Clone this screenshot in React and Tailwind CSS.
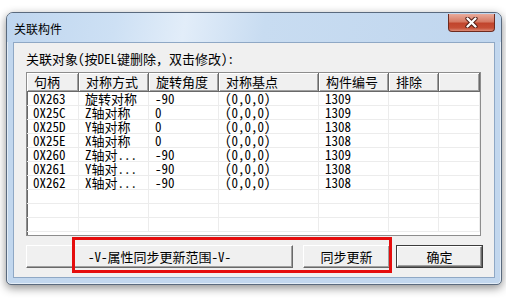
import React from 'react';

const font = "font-['Noto_Sans_Mono_CJK_SC','Noto_Sans_CJK_SC',monospace]";

const columns = [
    { title: '句柄', w: 'w-[52px]' },
    { title: '对称方式', w: 'w-[70px]' },
    { title: '旋转角度', w: 'w-[70px]' },
    { title: '对称基点', w: 'w-[100px]' },
    { title: '构件编号', w: 'w-[70px]' },
    { title: '排除', w: 'w-[50px]' },
    { title: '', w: 'flex-1' },
];

const rows = [
    ['0X263', '旋转对称', '-90', '(0,0,0)', '1309', ''],
    ['0X25C', 'Z轴对称', '0', '(0,0,0)', '1309', ''],
    ['0X25D', 'Y轴对称', '0', '(0,0,0)', '1308', ''],
    ['0X25E', 'X轴对称', '0', '(0,0,0)', '1308', ''],
    ['0X260', 'Z轴对...', '-90', '(0,0,0)', '1309', ''],
    ['0X261', 'Y轴对...', '-90', '(0,0,0)', '1308', ''],
    ['0X262', 'X轴对...', '-90', '(0,0,0)', '1308', ''],
    ['', '', '', '', '', ''],
    ['', '', '', '', '', ''],
    ['', '', '', '', '', ''],
];

const btn = "h-[23px] bg-[#f0f0f0] border border-t-white border-l-white border-r-[#696969] border-b-[#696969] shadow-[inset_-1px_-1px_0_#a0a0a0] flex items-center justify-center text-[13px] leading-[14px] text-black";

const App = () => {
    return (
        <div className="w-[506px] h-[303px] bg-white pt-[12px] pl-[6px]">
            {/* window */}
            <div className="w-[496px] flex flex-col border border-[#5a6a7e] rounded-t-[7px] rounded-b-[5px] bg-[#c2d7ee] shadow-[0_3px_10px_rgba(0,0,0,0.45),inset_0_0_0_1px_rgba(255,255,255,0.55)] pb-[6px]">
                {/* title bar */}
                <div className="h-[29px] flex justify-between pl-[7px] pr-[6px] rounded-t-[6px] bg-[linear-gradient(100deg,#bfd6ef_0%,#cde0f4_22%,#e2edf9_36%,#c8dcf1_52%,#c0d6ee_100%)]">
                    <span className="mt-[9px] h-[14px] leading-[14px] text-[12px] text-black font-['Noto_Sans_CJK_SC',sans-serif]">关联构件</span>
                    <div className="mt-[1px] w-[47px] h-[18px] rounded-b-[4px] border border-t-0 border-[#6e2a1e] bg-[linear-gradient(to_bottom,#e9ab9b_0%,#d67a64_45%,#c1452d_55%,#c64f36_82%,#dc8a76_100%)] flex items-center justify-center">
                        <svg width="13" height="11" viewBox="0 0 13 11">
                            <path d="M2.5 1.5 L10.5 9.5 M10.5 1.5 L2.5 9.5" stroke="#4a1810" strokeWidth="4.2" strokeLinecap="round" />
                            <path d="M2.5 1.5 L10.5 9.5 M10.5 1.5 L2.5 9.5" stroke="#ffffff" strokeWidth="2.4" strokeLinecap="round" />
                        </svg>
                    </div>
                </div>

                {/* client area */}
                <div className={`relative mx-[6px] w-[482px] h-[236px] border border-[#8fa8c5] bg-[#f0f0f0] pt-[9px] pl-[12px] ${font}`}>
                    <div className="h-[14px] leading-[14px] text-[13px] text-black">关联对象(按DEL键删除，双击修改):</div>

                    {/* list view */}
                    <div className="mt-[6px] w-[455px] h-[164px] bg-white border border-[#8d8d8d] shadow-[inset_1px_1px_0_#696969] flex flex-col">
                        <div className="flex h-[19px] shrink-0">
                            {columns.map((c, i) => (
                                <div key={i} className={`${c.w} h-[19px] bg-[#f0f0f0] border-r border-b border-[#696969] shadow-[inset_1px_1px_0_#fff,inset_-1px_-1px_0_#a0a0a0] pl-[7px] text-[13px] leading-[18px] text-black whitespace-nowrap`}>
                                    {c.title}
                                </div>
                            ))}
                        </div>
                        {rows.map((r, ri) => (
                            <div key={ri} className="flex h-[14px] shrink-0">
                                {columns.map((c, ci) => (
                                    <div key={ci} className={`${c.w} h-[14px] border-r border-b border-[#ececec] pl-[6px] text-[13px] leading-[14px] text-black whitespace-nowrap`}>
                                        {r[ci] || ''}
                                    </div>
                                ))}
                            </div>
                        ))}
                    </div>

                    {/* buttons */}
                    <div className="mt-[9px] flex">
                        <div className={`${btn} w-[267px]`}>-V-属性同步更新范围-V-</div>
                        <div className={`${btn} w-[87px] ml-[10px]`}>同步更新</div>
                        <div className="ml-[6px] w-[87px] h-[23px] border border-[#3c3c3c]">
                            <div className={`${btn} w-full h-full`}>确定</div>
                        </div>
                    </div>

                    {/* red annotation box */}
                    <div className="absolute left-[58px] top-[194px] w-[320px] h-[36px] border-[3px] border-[#e50d0d]"></div>
                </div>
            </div>
        </div>
    );
};

export default App;
